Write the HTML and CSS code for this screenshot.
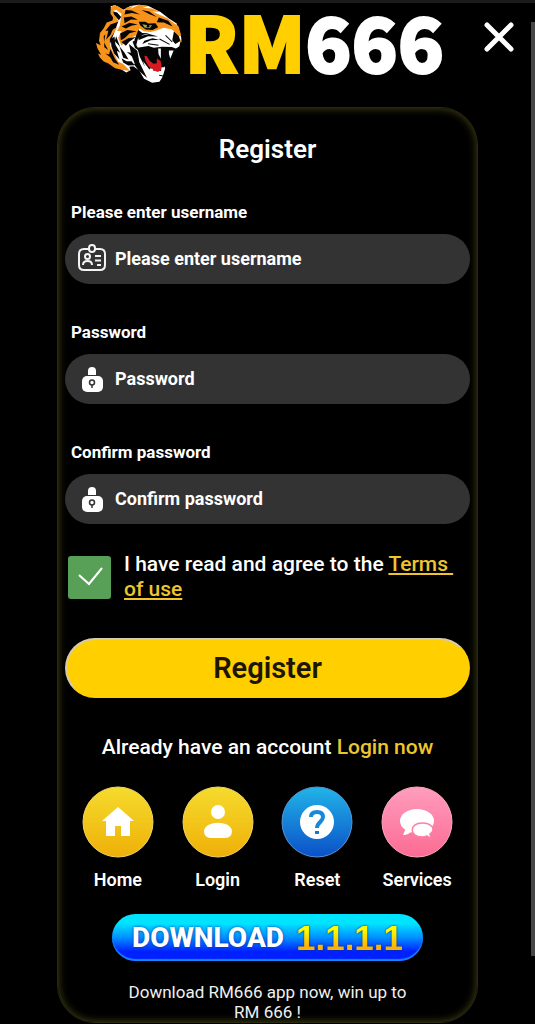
FILE: index.html
```html
<!DOCTYPE html>
<html lang="en">
<head>
<meta charset="utf-8">
<meta name="viewport" content="width=device-width, initial-scale=1">
<title>RM666 Register</title>
<link rel="stylesheet" href="styles.css">
</head>
<body>
<div class="scrollbar" aria-hidden="true"></div>
<header class="header">
  <div class="logo">
    <svg class="tiger" viewBox="20 8 260 238" aria-hidden="true">
      <path fill="#fff" d="M66 18 80 15 104 28 124 17 150 13 178 17 214 35 240 55 262 69 276 112 270 137 256 146 240 150 225 195 228 202 220 228 211 242 189 245 165 233 150 208 133 196 121 198 125 208 112 215 92 202 76 175 62 135 88 64 68 42Z"/>
      <path fill="#f7931a" d="M66 22 74 14 90 19 105 30 98 40 82 28 74 31 77 44 90 63 65 72 50 91 70 88 86 79 76 96 63 116 65 139 79 164 88 183 102 189 124 210 102 207 79 202 59 188 45 182 34 171 28 158 37 162 26 142 22 127 36 134 31 120 34 97 45 83 54 66 71 60 73 51 65 39Z"/>
      <path fill="#f7931a" d="M98 39 113 22 133 16 124 26 150 13 177 17 161 22 189 24 214 35 190 33 211 43 235 53 252 67 268 78 275 103 262 112 258 94 246 86 223 82 204 89 184 94 165 92 151 84 146 102 129 111 111 122 98 135 88 112 98 91 85 91 93 75Z"/>
      <path fill="#050505" d="M73 33 85 36 97 50 90 59 76 43ZM110 29 129 30 153 42 129 38 107 42ZM157 29 180 33 203 50 180 41ZM105 51 127 48 147 58 126 57 107 68ZM98 78 122 67 146 72 127 76 111 84ZM94 99 115 88 143 92 122 98 108 112 96 119ZM149 64 169 64 178 69 199 68 207 80 190 88 170 87 154 75ZM209 51 237 61 250 78 224 66 203 65ZM60 82 77 76 65 103 52 117 57 99ZM45 107 50 101 46 125 58 148 47 140ZM65 145 78 173 91 192 73 184 65 170 50 158 61 161ZM82 107 94 139 86 130 78 121ZM92 137 107 156 119 176 103 171ZM120 130 145 150 151 184 174 231 151 211 133 188 138 190 129 167 114 154 126 156Z"/>
      <path fill="#050505" d="M66 116 77 108 80 132 94 156 84 150 92 176 76 158 68 138ZM98 124 118 113 141 109 121 123 111 135ZM131 123 147 113 142 133 152 151 138 142ZM98 172 113 181 128 181 137 193 118 194 103 185ZM148 88 160 97 181 98 160 103 147 116 136 119Z"/>
      <path fill="#050505" d="M254 92 269 108 273 121 258 130 249 119ZM153 106 180 100 207 108 177 107 148 119ZM166 120 190 113 211 117 185 119 160 130ZM145 141 178 136 194 141 218 138 248 139 268 147 262 154 243 190 225 197 224 206 217 210 191 209 180 205 165 193 152 167Z"/>
      <path fill="#d71920" d="M166 165 173 166 182 180 193 189 203 187 203 173 214 180 217 192 216 207 206 213 191 207 178 196 169 180Z"/>
      <path fill="#fff" d="M207 143 215 143 215 174 208 160ZM239 149 253 149 243 174 239 159ZM182 202 191 204 194 216 184 216ZM217 199 226 199 223 214 215 214ZM162 181 176 199 184 211 171 207Z"/>
      <path fill="#a3a938" d="M160 71 177 74 189 74 182 83 166 81Z"/>
      <circle cx="177" cy="77" r="4"/>
      <path fill="#f7931a" d="m254 79 8-11-1 14ZM271 119 277 114 276 126Z"/>
      <path stroke="#050505" stroke-width="3" fill="none" d="m211 115 30 16M177 129l31 5M229 104l20 20M210 223l12 2"/>
    </svg>
    <span class="logo-text"><span class="gold">RM</span>666</span>
  </div>
  <button class="close" type="button" aria-label="Close">
    <svg viewBox="0 0 30 30" aria-hidden="true"><path d="M3 3 27 27M27 3 3 27"/></svg>
  </button>
</header>
<main class="main">
  <form class="card">
    <h1 class="title">Register</h1>
    <div class="field">
      <label for="user">Please enter username</label>
      <div class="box">
        <svg class="icon line" viewBox="0 0 30 30" aria-hidden="true">
          <path d="M12 5H7Q2 5 2 10V21Q2 26 7 26H23Q28 26 28 21V10Q28 5 23 5H18"/>
          <rect x="12" y="1" width="6" height="7" rx="3"/><circle cx="10.500" cy="12.500" r="2.500"/>
          <path d="M6 21Q6 17 10.500 17T15 21M18 12h6M18 16.500h6M20 21h4"/>
        </svg>
        <input id="user" type="text" placeholder="Please enter username">
      </div>
    </div>
    <div class="field">
      <label for="pass">Password</label>
      <div class="box">
        <svg class="icon" viewBox="0 0 30 30" aria-hidden="true">
          <path fill="#fff" d="M11 11V7a4 4 0 0 1 8 0v4Z"/><rect x="5" y="12" width="21" height="16" rx="5" fill="#fff"/>
          <circle cx="15" cy="18.500" r="2.500" fill="none" stroke="#333" stroke-width="1.500"/><path stroke="#333" stroke-width="1.500" d="M15 21v3"/>
        </svg>
        <input id="pass" type="password" placeholder="Password">
      </div>
    </div>
    <div class="field">
      <label for="confirm">Confirm password</label>
      <div class="box">
        <svg class="icon" viewBox="0 0 30 30" aria-hidden="true">
          <path fill="#fff" d="M11 11V7a4 4 0 0 1 8 0v4Z"/><rect x="5" y="12" width="21" height="16" rx="5" fill="#fff"/>
          <circle cx="15" cy="18.500" r="2.500" fill="none" stroke="#333" stroke-width="1.500"/><path stroke="#333" stroke-width="1.500" d="M15 21v3"/>
        </svg>
        <input id="confirm" type="password" placeholder="Confirm password">
      </div>
    </div>
    <div class="agree">
      <span class="check">
        <input id="agree" type="checkbox" checked>
        <svg viewBox="0 0 43 43" aria-hidden="true"><path d="M11 19 21 28 34 12"/></svg>
      </span>
      <label for="agree">I have read and agree to the <a href="#terms">Terms&nbsp; of use</a></label>
    </div>
    <button class="submit" type="submit">Register</button>
    <p class="already">Already have an account <a href="#login">Login now</a></p>
    <nav class="links">
      <a href="#home">
        <svg viewBox="0 0 72 72" aria-hidden="true">
          <defs>
            <linearGradient id="gold" x2="0" y2="1"><stop stop-color="#f5db2d"/><stop offset="1" stop-color="#efb008"/></linearGradient>
            <linearGradient id="blue" x2="0" y2="1"><stop stop-color="#22b4e8"/><stop offset="1" stop-color="#0b50c8"/></linearGradient>
            <linearGradient id="pink" x2="0" y2="1"><stop stop-color="#ff9dbd"/><stop offset="1" stop-color="#fb6b93"/></linearGradient>
          </defs>
          <circle cx="36" cy="36" r="35" fill="url(#gold)" stroke="#f0d568"/>
          <path fill="#fff" d="M36 21 52 35H48V50H39V40H33V50H24V35H20Z"/>
        </svg>Home</a>
      <a href="#login">
        <svg viewBox="0 0 72 72" aria-hidden="true">
          <circle cx="36" cy="36" r="35" fill="url(#gold)" stroke="#f0d568"/>
          <circle cx="36" cy="26" r="7" fill="#fff"/>
          <path fill="#fff" d="M22 45C23 34 49 34 50 45Q50 52 43 52H29Q22 52 22 45Z"/>
        </svg>Login</a>
      <a href="#reset">
        <svg viewBox="0 0 72 72" aria-hidden="true">
          <circle cx="36" cy="36" r="35" fill="url(#blue)" stroke="#5795cf"/>
          <circle cx="36" cy="36" r="17" fill="#fff"/>
          <path fill="none" stroke="#1689d8" stroke-width="4" d="M30 31Q30 26 36 26T42 31C42 36 36 36 36 42"/><path fill="#1277d5" d="M34 45h4v3h-4Z"/>
        </svg>Reset</a>
      <a href="#services">
        <svg viewBox="0 0 72 72" aria-hidden="true">
          <circle cx="36" cy="36" r="35" fill="url(#pink)" stroke="#ffa8c0"/>
          <ellipse cx="36" cy="35" rx="17" ry="12" fill="#fff"/><path fill="#fff" d="m26 40-4 9q6 0 10-5Z"/>
          <path fill="#fff" stroke="#fd7fa3" stroke-width="1.500" d="M41 37C28 37 28 51 41 51Q44 51 46 50L50 53 49 48C56 43 50 37 41 37Z"/>
        </svg>Services</a>
    </nav>
    <button class="download" type="button"><span class="word">DOWNLOAD</span><span class="version">1.1.1.1</span></button>
    <p class="note">Download RM666 app now, win up to RM 666 !</p>
  </form>
</main>
</body>
</html>
```
FILE: styles.css
```css
* { box-sizing: border-box; }
body { margin: 0; background: #000; color: #fff; font-family: Roboto, sans-serif; border-top: 3px solid #1c1c1c; }
a { color: #efc52e; }
.scrollbar { position: fixed; top: 22px; right: 0; bottom: 68px; width: 4px; background: #454545; }
.header { display: grid; grid-template-columns: 1fr auto 1fr; height: 104px; padding: 0 18px; }
.logo { grid-column: 2; display: flex; align-items: flex-start; gap: 2px; padding-left: 4px; }
.tiger { width: 88px; height: 80px; }
.logo-text { font: 900 76px/74px "Noto Sans CJK SC", "Noto Sans", sans-serif; -webkit-text-stroke: 2px #fff; }
.gold { color: #ffcf00; -webkit-text-stroke-color: #ffcf00; }
.close { justify-self: end; align-self: start; margin-top: 19px; width: 36px; height: 32px; padding: 0; border: 0; background: none; }
.close svg { width: 30px; height: 30px; fill: none; stroke: #fff; stroke-width: 5; stroke-linecap: round; }
.main { padding: 0 57px; }
.card { padding: 26px 7px 0; border-radius: 38px; box-shadow: inset 0 0 8px #48481a; border: 1px solid #29290e; display: flex; flex-direction: column; }
.title { margin: 0 0 38px; font-size: 26px; line-height: 30px; font-weight: 600; text-align: center; }
.field { display: flex; flex-direction: column; gap: 12px; margin-bottom: 38px; }
.field label { padding-left: 6px; font-size: 17px; line-height: 20px; font-weight: 700; }
.box { display: flex; align-items: center; height: 50px; padding: 0 12px; gap: 8px; border-radius: 25px; background: #333; }
.icon { flex: none; width: 30px; height: 30px; }
.line { fill: none; stroke: #f4f4f4; stroke-width: 2; }
.box input { flex: 1; min-width: 0; padding: 0; border: 0; outline: 0; background: none; color: #fff; font: 700 18px/24px Roboto, sans-serif; }
.box input::placeholder { color: #fff; opacity: 1; }
.agree { display: flex; align-items: center; gap: 13px; margin: -10px 0 36px; padding: 0 4px 0 3px; font-size: 21px; line-height: 25px; font-weight: 500; }
.check { display: grid; flex: none; width: 43px; height: 43px; }
.check > * { grid-area: 1 / 1; width: 43px; height: 43px; margin: 0; }
.check input { appearance: none; border-radius: 3px; background: #58a058; }
.check svg { pointer-events: none; fill: none; stroke: #fff; stroke-width: 2; }
.submit { height: 60px; border: 2px solid #ffcf00; border-top-color: #d5ccaa; border-left-color: #d5ccaa; border-radius: 30px; background: #ffcf00; color: #1c1600; font: 600 29px/34px Roboto, sans-serif; }
.already { margin: 36px 0 26px; font-size: 21px; line-height: 26px; font-weight: 500; text-align: center; }
.already a { text-decoration: none; }
.links { display: grid; grid-template-columns: repeat(4, 1fr); padding: 0 3px; }
.links a { display: flex; flex-direction: column; align-items: center; gap: 11px; color: #fff; font-size: 18px; line-height: 22px; font-weight: 600; text-decoration: none; }
.links svg { width: 72px; height: 72px; }
.download { align-self: center; display: flex; align-items: center; justify-content: center; gap: 12px; width: 311px; height: 47px; margin-top: 23px; padding: 0; border: 0; border-radius: 24px; background: linear-gradient(#00e4ff 20%, #0090ff 50%, #0020ff 80%); box-shadow: inset 0 -2px 1px #1688ff; white-space: nowrap; }
.word { color: #fff; font: 800 28px/46px Roboto, sans-serif; text-shadow: 0 0 3px #0038a8; }
.version { font: 700 35px/46px "Liberation Sans", sans-serif; color: transparent; background: linear-gradient(#ffff00 30%, #ffb000 70%); background-clip: text; -webkit-background-clip: text; filter: drop-shadow(0 0 1px #003878); }
.note { width: 300px; max-width: 100%; align-self: center; margin: 21px 0 0; font-size: 17px; line-height: 20px; text-align: center; color: #f0f0f0; }
```
